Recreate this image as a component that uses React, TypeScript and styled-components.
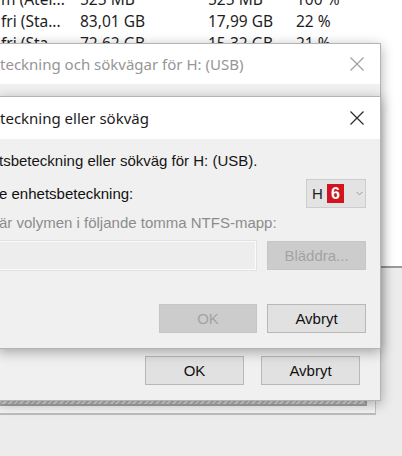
import React from "react";
import styled, { createGlobalStyle } from "styled-components";

const Global = createGlobalStyle`
  html, body { margin: 0; padding: 0; }
  body { width: 402px; height: 456px; overflow: hidden; background: #ececec; }
`;

const Screen = styled.div`
  position: relative;
  width: 402px;
  height: 456px;
  overflow: hidden;
  display: flex;
  flex-direction: column;
  background: #ececec;
`;

const ListArea = styled.div`
  height: 268px;
  background: #ffffff;
  border-bottom: 2px solid #9a9a9a;
  box-sizing: border-box;
  display: flex;
  flex-direction: column;
  overflow: hidden;
`;

const Rows = styled.div`
  margin-top: -12px;
  display: flex;
  flex-direction: column;
`;

const Row = styled.div`
  display: grid;
  grid-template-columns: 79px 128px 88px 1fr;
  height: 22px;
  align-items: center;
  padding-left: 1px;
  font-family: "Noto Sans", "Open Sans", sans-serif;
  font-size: 15.5px;
  color: #1e1e1e;
  white-space: nowrap;
`;

const LowerArea = styled.div`
  flex: 1;
  display: flex;
  flex-direction: column;
  padding-top: 29px;
`;

const DiskPanel = styled.div`
  margin-left: -10px;
  width: 386px;
  height: 118px;
  box-sizing: border-box;
  background: #f4f4f4;
  border: 1px solid #c4c4c4;
  border-bottom: 2px solid #bdbdbd;
  display: flex;
  flex-direction: column;
  justify-content: flex-end;
  padding: 0 8px 7px 0;
`;

const Hatch = styled.div`
  height: 9px;
  border: 2px solid #a6a6a6;
  border-left: none;
  background: repeating-linear-gradient(
    135deg,
    #b9b9b9 0px,
    #b9b9b9 2px,
    #dcdcdc 2px,
    #dcdcdc 4px
  );
`;

const Window = styled.div<{ $top: number; $height: number }>`
  position: absolute;
  top: ${(p) => p.$top}px;
  left: -2px;
  width: 383px;
  height: ${(p) => p.$height}px;
  box-sizing: border-box;
  border: 1px solid #b4b4b4;
  background: #f0f0f0;
  box-shadow: 0 3px 12px rgba(0, 0, 0, 0.32);
  display: flex;
  flex-direction: column;
`;

const TitleBar = styled.div<{ $h: number; $active?: boolean }>`
  height: ${(p) => p.$h}px;
  flex-shrink: 0;
  background: #ffffff;
  display: flex;
  align-items: center;
  justify-content: space-between;
  padding: 0 16px 0 1px;
  font-family: "Noto Sans", "Open Sans", sans-serif;
  font-size: 15px;
  color: ${(p) => (p.$active ? "#1b1b1b" : "#969696")};
  white-space: nowrap;
`;

const CloseIcon = ({ color }: { color: string }) => (
  <svg width="14" height="14" viewBox="0 0 14 14">
    <path d="M0.5 0.5 L13.5 13.5 M13.5 0.5 L0.5 13.5" stroke={color} strokeWidth="1.2" fill="none" />
  </svg>
);

const OuterBody = styled.div`
  flex: 1;
  display: flex;
  flex-direction: column;
  justify-content: flex-end;
  padding: 0 20px 15px 0;
`;

const ButtonRow = styled.div<{ $gap: number }>`
  display: flex;
  justify-content: flex-end;
  gap: ${(p) => p.$gap}px;
`;

const Button = styled.div<{ $disabled?: boolean; $w?: number }>`
  width: ${(p) => p.$w ?? 99}px;
  height: 29px;
  box-sizing: border-box;
  display: flex;
  align-items: center;
  justify-content: center;
  font-family: "Liberation Sans", Arial, sans-serif;
  font-size: 15px;
  color: ${(p) => (p.$disabled ? "#a3a3a3" : "#111111")};
  background: ${(p) => (p.$disabled ? "#cccccc" : "#e1e1e1")};
  border: 1px solid ${(p) => (p.$disabled ? "#c6c6c6" : "#b8b8b8")};
`;

const InnerBody = styled.div`
  flex: 1;
  display: flex;
  flex-direction: column;
  padding: 14px 14px 0 0;
  font-family: "Liberation Sans", Arial, sans-serif;
  font-size: 15px;
  color: #111111;
`;

const Line = styled.div<{ $muted?: boolean; $mt?: number }>`
  height: 16px;
  line-height: 16px;
  margin-top: ${(p) => p.$mt ?? 0}px;
  color: ${(p) => (p.$muted ? "#8c8c8c" : "#151515")};
  white-space: nowrap;
`;

const FieldRow = styled.div<{ $mt: number }>`
  display: flex;
  align-items: center;
  justify-content: space-between;
  margin-top: ${(p) => p.$mt}px;
  gap: 11px;
`;

const Combo = styled.div`
  width: 60px;
  height: 29px;
  box-sizing: border-box;
  background: #e3e3e3;
  border: 1px solid #cdcdcd;
  display: flex;
  align-items: center;
  padding-left: 5px;
  gap: 4px;
  color: #222;
  font-size: 15px;
`;

const Badge = styled.span`
  width: 17px;
  height: 19px;
  background: #d2141e;
  color: #ffffff;
  font-weight: bold;
  font-size: 16px;
  display: flex;
  align-items: center;
  justify-content: center;
`;

const Chevron = styled.span`
  margin-left: 8px;
  display: flex;
`;

const Input = styled.div`
  flex: 1;
  height: 29px;
  margin-left: -4px;
  box-sizing: border-box;
  background: #ededed;
  border: 1px solid #fbfbfb;
  outline: 1px solid #e2e2e2;
`;

export default function App() {
  return (
    <>
      <Global />
      <Screen>
        <ListArea>
          <Rows>
            <Row>
              <span>m (Åter...</span>
              <span>525 MB</span>
              <span>525 MB</span>
              <span>100 %</span>
            </Row>
            <Row>
              <span>fri (Sta...</span>
              <span>83,01 GB</span>
              <span>17,99 GB</span>
              <span>22 %</span>
            </Row>
            <Row>
              <span>fri (Sta...</span>
              <span>72,62 GB</span>
              <span>15,32 GB</span>
              <span>21 %</span>
            </Row>
          </Rows>
        </ListArea>
        <LowerArea>
          <DiskPanel>
            <Hatch />
          </DiskPanel>
        </LowerArea>

        <Window $top={43} $height={358}>
          <TitleBar $h={40}>
            <span>teckning och sökvägar för H: (USB)</span>
            <CloseIcon color="#a0a0a0" />
          </TitleBar>
          <OuterBody>
            <ButtonRow $gap={17}>
              <Button>OK</Button>
              <Button>Avbryt</Button>
            </ButtonRow>
          </OuterBody>
        </Window>

        <Window $top={96} $height={253}>
          <TitleBar $h={42} $active>
            <span>teckning eller sökväg</span>
            <CloseIcon color="#2a2a2a" />
          </TitleBar>
          <InnerBody>
            <Line>tsbeteckning eller sökväg för H: (USB).</Line>
            <FieldRow $mt={10}>
              <span>e enhetsbeteckning:</span>
              <Combo>
                <span>H</span>
                <Badge>6</Badge>
                <Chevron>
                  <svg width="7" height="5" viewBox="0 0 7 5">
                    <path d="M0.5 0.8 L3.5 3.8 L6.5 0.8" stroke="#9a9a9a" strokeWidth="1" fill="none" />
                  </svg>
                </Chevron>
              </Combo>
            </FieldRow>
            <Line $muted $mt={7}>är volymen i följande tomma NTFS-mapp:</Line>
            <FieldRow $mt={10}>
              <Input />
              <Button $disabled>Bläddra...</Button>
            </FieldRow>
            <FieldRow $mt={34}>
              <span />
              <ButtonRow $gap={10}>
                <Button $disabled $w={98}>OK</Button>
                <Button>Avbryt</Button>
              </ButtonRow>
            </FieldRow>
          </InnerBody>
        </Window>
      </Screen>
    </>
  );
}
